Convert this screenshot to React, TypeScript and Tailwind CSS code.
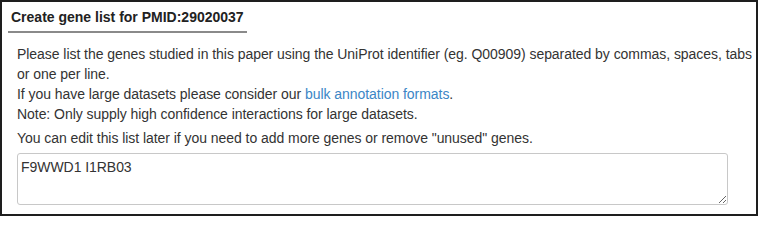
export default function App() {
  return (
    <div
      className="w-[758px] h-[216px] border-2 border-[#1e1e1e] bg-white text-[14px] leading-[20px] text-[#333]"
      style={{ fontFamily: '"Liberation Sans", Arial, sans-serif' }}
    >
      <div className="ml-[6px] mt-[5px] inline-block border-b-2 border-[#8a8a8a] pl-[3px] pr-[3px] pb-[4px] text-[14px] font-bold text-[#222]">
        Create gene list for PMID:29020037
      </div>
      <div className="pl-[15px] pt-[11px] tracking-[-0.05px]">
        <p>
          Please list the genes studied in this paper using the UniProt identifier (eg. Q00909) separated by commas, spaces, tabs or one per line.
        </p>
        <p>
          If you have large datasets please consider our{" "}
          <a href="#" className="text-[#3b86c6]">
            bulk annotation formats
          </a>
          .
        </p>
        <p>Note: Only supply high confidence interactions for large datasets.</p>
        <p className="mt-[4px]">You can edit this list later if you need to add more genes or remove "unused" genes.</p>
        <textarea
          defaultValue="F9WWD1 I1RB03"
          className="mt-[5px] block h-[52px] w-[711px] rounded-[3px] border border-[#c8c8c8] px-[3px] py-[3px] text-[14px] leading-[20px] text-[#333] outline-none"
          style={{ fontFamily: '"Liberation Sans", Arial, sans-serif' }}
        />
      </div>
    </div>
  );
}
